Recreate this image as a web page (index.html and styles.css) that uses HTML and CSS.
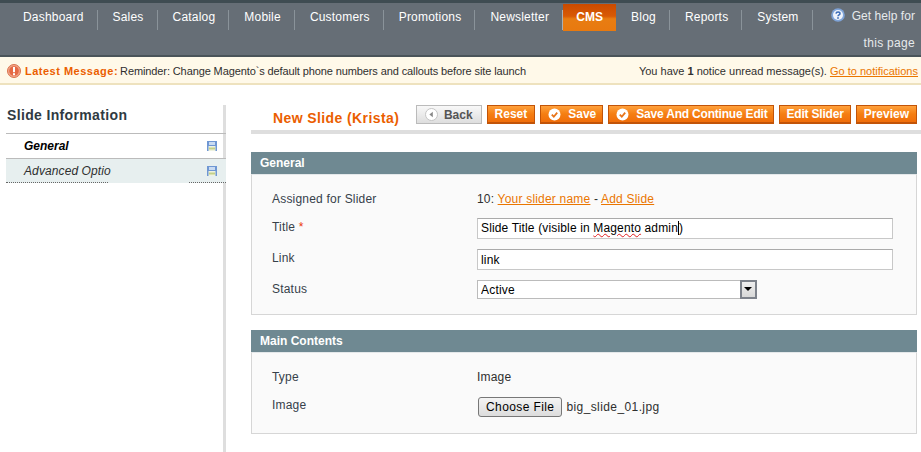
FILE: index.html
```html
<!DOCTYPE html>
<html lang="en">
<head>
    <meta charset="UTF-8">
    <meta name="viewport" content="width=device-width, initial-scale=1.0">
    <title>New Slide (Krista)</title>
    <link rel="stylesheet" href="styles.css">
</head>
<body>
    <nav class="nav-bar">
        <ul class="nav-list">
            <li class="nav-item">Dashboard</li>
            <li class="nav-item">Sales</li>
            <li class="nav-item">Catalog</li>
            <li class="nav-item">Mobile</li>
            <li class="nav-item">Customers</li>
            <li class="nav-item">Promotions</li>
            <li class="nav-item nav-before-active">Newsletter</li>
            <li class="nav-item nav-active">CMS</li>
            <li class="nav-item">Blog</li>
            <li class="nav-item">Reports</li>
            <li class="nav-item">System</li>
        </ul>
        <a class="nav-help" href="#">
            <svg class="help-icon" width="14" height="14" viewBox="0 0 14 14">
                <circle cx="7" cy="7" r="6.8" fill="#7fa4d8"/>
                <circle cx="7" cy="7" r="5" fill="#eef3fb"/>
                <path d="M5 5.6C5.2 3.6 9 3.6 9 5.7C9 7 7 6.9 7 8.3" fill="none" stroke="#3a6cb8" stroke-width="1.5"/>
                <rect x="6.2" y="9.2" width="1.6" height="1.6" fill="#3a6cb8"/>
            </svg>
            Get help for<br><span class="help-second">this page</span>
        </a>
    </nav>

    <div class="notice-bar">
        <div class="notice-left">
            <svg class="notice-icon" width="14" height="14" viewBox="0 0 14 14">
                <circle cx="7" cy="7" r="6.5" fill="#f2a58a" stroke="#d9744e"/>
                <circle cx="7" cy="7" r="4.8" fill="#e56a45"/>
                <rect x="6" y="3" width="2" height="5.2" fill="#fff"/>
                <rect x="6" y="9.2" width="2" height="2" fill="#fff"/>
            </svg>
            <strong class="notice-label">Latest Message:</strong>
            Reminder: Change Magento`s default phone numbers and callouts before site launch
        </div>
        <div>You have <b>1</b> notice unread message(s). <a href="#">Go to notifications</a></div>
    </div>

    <div class="page">
        <aside class="sidebar">
            <h3 class="sidebar-title">Slide Information</h3>
            <ul class="tabs">
                <li class="tab tab-current">
                    General
                    <svg class="save-icon" width="10" height="10" viewBox="0 0 10 10">
                        <rect width="10" height="10" fill="#6f97d3"/>
                        <rect x="2" y="1" width="6" height="3" fill="#c9dbf2"/>
                        <rect x="1.5" y="5" width="7" height="5" fill="#eef2e0"/>
                        <rect x="2" y="6.5" width="6" height="2" fill="#c3d088"/>
                    </svg>
                </li>
                <li class="tab tab-alt">
                    Advanced Optio
                    <svg class="save-icon" width="10" height="10" viewBox="0 0 10 10">
                        <rect width="10" height="10" fill="#6f97d3"/>
                        <rect x="2" y="1" width="6" height="3" fill="#c9dbf2"/>
                        <rect x="1.5" y="5" width="7" height="5" fill="#eef2e0"/>
                        <rect x="2" y="6.5" width="6" height="2" fill="#c3d088"/>
                    </svg>
                </li>
            </ul>
        </aside>

        <main class="content">
            <div class="content-header">
                <h3 class="page-title">New Slide (Krista)</h3>
                <div class="actions">
                    <button type="button" class="btn btn-back">
                        <svg width="13" height="13" viewBox="0 0 13 13">
                            <circle cx="6.5" cy="6.5" r="6" fill="#fff" stroke="#c4c4c4"/>
                            <path d="M7.8 3.8V9.2L4.4 6.5Z" fill="#888"/>
                        </svg>
                        Back
                    </button>
                    <button type="button" class="btn">Reset</button>
                    <button type="button" class="btn btn-icon">
                        <svg width="13" height="13" viewBox="0 0 13 13">
                            <circle cx="6.5" cy="6.5" r="6" fill="#fff"/>
                            <path d="M3.8 6.6L5.8 8.7L9.2 4.6" fill="none" stroke="#e8751a" stroke-width="1.8"/>
                        </svg>
                        Save
                    </button>
                    <button type="button" class="btn btn-icon btn-narrow">
                        <svg width="13" height="13" viewBox="0 0 13 13">
                            <circle cx="6.5" cy="6.5" r="6" fill="#fff"/>
                            <path d="M3.8 6.6L5.8 8.7L9.2 4.6" fill="none" stroke="#e8751a" stroke-width="1.8"/>
                        </svg>
                        Save And Continue Edit
                    </button>
                    <button type="button" class="btn btn-edit btn-narrow">Edit Slider</button>
                    <button type="button" class="btn">Preview</button>
                </div>
            </div>

            <section class="section">
                <h4 class="section-head">General</h4>
                <div class="fieldset">
                    <div class="row row-info">
                        <div class="row-label">Assigned for Slider</div>
                        <div>10: <a href="#">Your slider name</a> - <a href="#">Add Slide</a></div>
                    </div>
                    <div class="row row-title">
                        <div class="row-label">Title <span class="required">*</span></div>
                        <div class="text-input"><span class="caret">Slide Title (visible in <span class="misspelled">Magento</span> admin</span>)</div>
                    </div>
                    <div class="row row-link">
                        <div class="row-label">Link</div>
                        <input class="text-input" type="text" value="link">
                    </div>
                    <div class="row row-status">
                        <div class="row-label">Status</div>
                        <div class="select-wrap">
                            <select class="select">
                                <option>Active</option>
                                <option>Inactive</option>
                            </select>
                            <span class="select-arrow"></span>
                        </div>
                    </div>
                </div>
            </section>

            <section class="section">
                <h4 class="section-head">Main Contents</h4>
                <div class="fieldset fieldset-main">
                    <div class="row row-type">
                        <div class="row-label">Type</div>
                        <div>Image</div>
                    </div>
                    <div class="row row-image">
                        <div class="row-label">Image</div>
                        <div class="file-field">
                            <button type="button" class="file-btn">Choose File</button>
                            <span>big_slide_01.jpg</span>
                        </div>
                    </div>
                </div>
            </section>
        </main>
    </div>
</body>
</html>
```

FILE: styles.css
```css
* {
    box-sizing: border-box;
}
html, body {
    height: 100%;
}
body {
    margin: 0;
    overflow: hidden;
    background-color: white;
    color: #2f2f2f;
    font-family: "Liberation Sans", Arial, sans-serif;
    font-size: 12px;
    letter-spacing: 0.2px;
}
a {
    color: #ea7601;
}
ul {
    margin: 0;
    padding: 0;
    list-style: none;
}
h3, h4 {
    margin: 0;
}

/* top navigation */
.nav-bar {
    display: flex;
    justify-content: space-between;
    height: 57px;
    padding-left: 8px;
    background-color: #666e76;
    border-top: 3px solid #3f4c52;
    border-bottom: 2px solid #4a5459;
    color: white;
}
.nav-list {
    display: flex;
    align-items: flex-start;
}
.nav-item {
    height: 20px;
    margin-top: 7px;
    padding: 0 13px 0 15px;
    border-right: 1px solid #8a939a;
    line-height: 15px;
    letter-spacing: 0.2px;
}
.nav-before-active {
    border-right-color: #a9b0b5;
}
.nav-active {
    width: 53px;
    height: 27px;
    margin-top: 1px;
    padding: 6px 0 0;
    text-align: center;
    font-weight: bold;
    letter-spacing: 0;
    border-right: none;
    background: linear-gradient(#c94a00 0, #d95a05 45%, #e87d12 55%, #e8790f 100%);
}
.nav-help {
    width: 88px;
    margin-right: 6px;
    color: #e6eaec;
    line-height: 27px;
    text-align: right;
    text-decoration: none;
    letter-spacing: 0.05px;
}
.help-second {
    letter-spacing: 0.3px;
}
.help-icon {
    margin-right: 3px;
    vertical-align: -2px;
}

/* message bar */
.notice-bar {
    display: flex;
    justify-content: space-between;
    align-items: center;
    height: 28px;
    padding: 1px 3px 0 7px;
    background-color: #fff9e9;
    border-bottom: 2px solid #eee2be;
    font-size: 11px;
    letter-spacing: 0;
}
.notice-left {
    display: flex;
    align-items: center;
    gap: 4px;
    letter-spacing: -0.11px;
}
.notice-label {
    margin-right: -2px;
    color: #eb5e00;
    letter-spacing: 0.5px;
}

/* page columns */
.page {
    display: flex;
    height: 367px;
    padding-top: 20px;
}
.sidebar {
    width: 226px;
    flex-shrink: 0;
    padding-left: 6px;
    border-right: 3px solid #dedede;
}
.sidebar-title {
    height: 29px;
    margin-right: -3px;
    padding: 2px 0 0 1px;
    border-bottom: 1px solid #bbb;
    color: #2f3a42;
    font-size: 14px;
    letter-spacing: 0.35px;
}
.tabs {
    margin-right: -3px;
}
.tab {
    display: flex;
    justify-content: space-between;
    align-items: center;
    height: 24px;
    padding: 0 9px 0 18px;
    color: #2f2f2f;
    font-style: italic;
}
.tab-current {
    color: black;
    font-weight: bold;
    letter-spacing: 0;
}
.tab-alt {
    position: relative;
    height: 25px;
    background-color: #e7efef;
    border-top: 1px solid #bbb;
    border-bottom: 1px dotted #666;
    letter-spacing: 0.1px;
}
/* the dotted line has a gap under the tab label */
.tab-alt::after {
    content: "";
    position: absolute;
    bottom: -1px;
    left: 103px;
    width: 80px;
    height: 1px;
    background-color: #e7efef;
}

/* main column */
.content {
    flex: 1;
    padding: 0 4px 0 25px;
}
.content-header {
    display: flex;
    justify-content: space-between;
    align-items: flex-start;
    height: 29px;
    margin-right: -4px;
    padding: 0 4px 0 22px;
    border-bottom: 4px solid #dedede;
}
.page-title {
    padding-top: 5px;
    color: #eb5e00;
    font-size: 14px;
    letter-spacing: 0.4px;
}
.actions {
    display: flex;
    gap: 5px;
}
.btn {
    display: flex;
    align-items: center;
    gap: 6px;
    height: 19px;
    padding: 0 7px;
    border: 1px solid #c25408;
    border-width: 1px 1px 2px 1px;
    background: linear-gradient(#ffa13c, #f57e12 50%, #f06e0a);
    color: white;
    font-family: inherit;
    font-size: 12px;
    font-weight: bold;
    letter-spacing: 0;
}
.btn-icon {
    gap: 7px;
    padding-right: 6px;
}
.btn-narrow {
    letter-spacing: -0.2px;
}
.btn-edit {
    padding: 0 6px;
}
.btn-back {
    padding: 0 8px;
    border: 1px solid #bbb;
    background: linear-gradient(#f8f8f8, #dedede);
    color: #555;
}

/* form sections */
.section {
    margin-top: 18px;
}
.section + .section {
    margin-top: 15px;
}
.section-head {
    height: 22px;
    padding: 4px 9px 0;
    background-color: #6f8992;
    color: white;
    font-size: 12px;
    letter-spacing: 0;
}
.fieldset {
    height: 141px;
    padding: 0 23px 0 20px;
    background-color: #fafafa;
    border: 1px solid #d6d6d6;
    border-top-color: #e4e8ea;
}
.fieldset-main {
    height: 82px;
}
.row {
    display: flex;
    align-items: flex-start;
}
.row-label {
    width: 205px;
    flex-shrink: 0;
    color: #36414a;
}
.row-info {
    padding-top: 17px;
    height: 43px;
}
.row-title {
    height: 31px;
}
.row-link {
    height: 31px;
}
.row-title .row-label,
.row-link .row-label,
.row-status .row-label {
    padding-top: 2px;
}
.required {
    color: #eb340a;
}
.text-input {
    flex: 1;
    height: 21px;
    padding: 2px 3px;
    background-color: white;
    border: 1px solid #c8c8c8;
    border-top-color: #aaa;
    color: black;
    font-family: inherit;
    font-size: 12px;
    letter-spacing: 0.15px;
    line-height: 15px;
}
.caret {
    border-right: 1px solid black;
}
.misspelled {
    text-decoration: underline wavy #e02020 1px;
}
.select-wrap {
    position: relative;
    width: 280px;
}
.select {
    display: block;
    width: 100%;
    height: 19px;
    padding: 0 3px;
    appearance: none;
    background-color: white;
    border: 1px solid #bbb;
    border-radius: 0;
    color: black;
    font-family: inherit;
    font-size: 12px;
    letter-spacing: 0.2px;
}
.select-arrow {
    position: absolute;
    top: 0;
    right: 0;
    width: 17px;
    height: 19px;
    background: linear-gradient(#eee, #d8d8d8);
    border: 2px solid #7d828b;
}
.select-arrow::after {
    content: "";
    position: absolute;
    top: 5px;
    left: 2px;
    border-style: solid;
    border-width: 4px 4px 0;
    border-color: black transparent transparent;
}
.row-type {
    height: 27px;
    padding-top: 17px;
    box-sizing: content-box;
}
.row-image .row-label {
    padding-top: 1px;
}
.file-field {
    display: flex;
    align-items: center;
    gap: 4px;
    padding-left: 1px;
    letter-spacing: 0.4px;
}
.file-btn {
    height: 20px;
    padding: 0 7px;
    background: linear-gradient(#f4f4f4, #dcdcdc);
    border: 1px solid #777;
    border-radius: 3px;
    color: black;
    font-family: inherit;
    font-size: 12px;
    letter-spacing: 0.4px;
}
```
